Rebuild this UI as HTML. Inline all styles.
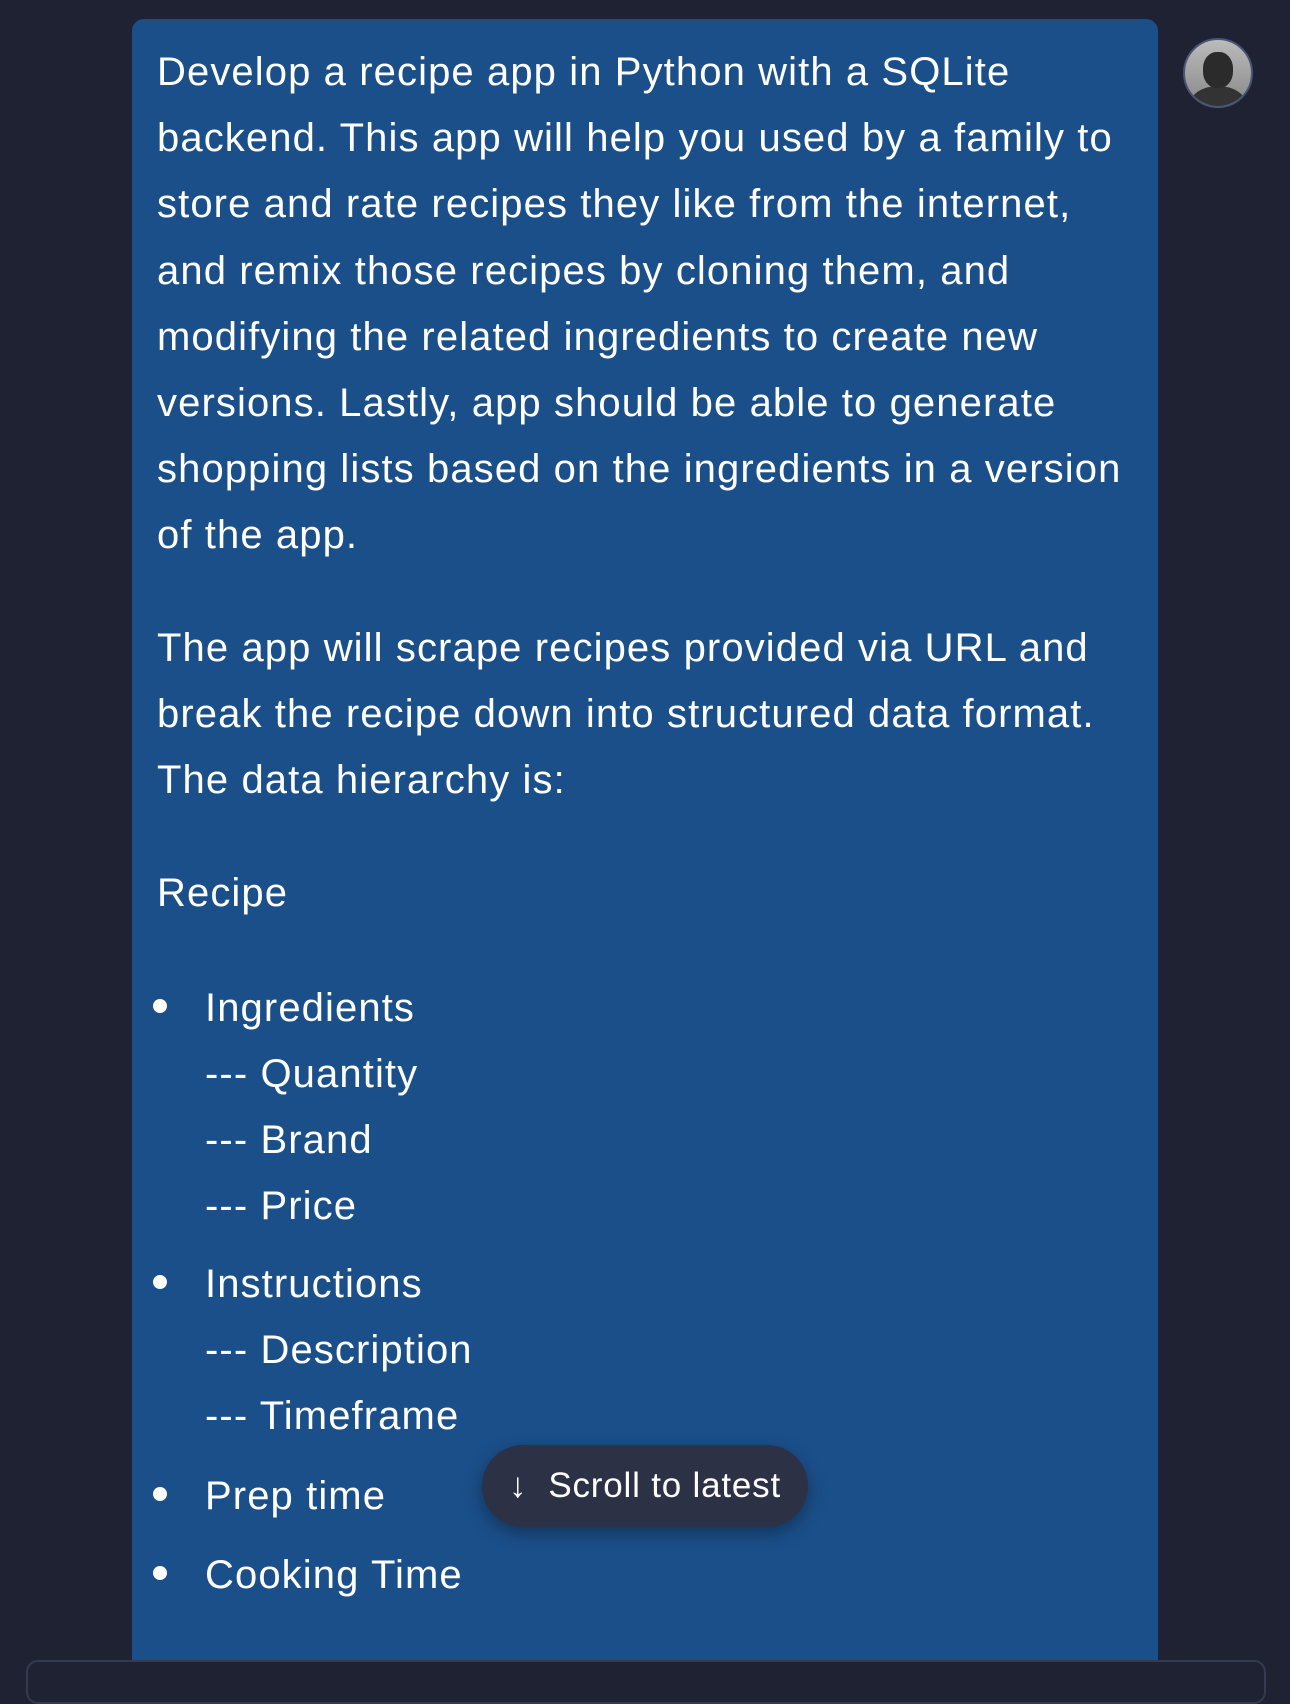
<!DOCTYPE html>
<html><head><meta charset="utf-8"><style>
html,body{margin:0;padding:0;}
body{width:1290px;height:1675px;background:#1e2232;position:relative;overflow:hidden;font-family:"Liberation Sans",sans-serif;color:#fff;}
.bubble{position:absolute;left:132px;top:19px;width:1026px;height:1680px;background:#1b4f8a;border-radius:12px;}
.l{position:absolute;left:157px;font-size:40px;line-height:66px;height:66px;white-space:nowrap;letter-spacing:1.1px;}
.s{left:205px;}
.dot{position:absolute;left:153px;width:14px;height:14px;border-radius:50%;background:#fff;}
.avatar{position:absolute;left:1183px;top:38px;width:66px;height:66px;border-radius:50%;border:2px solid #4a5576;overflow:hidden;background:linear-gradient(#bbb,#888);}
.avatar .f{position:absolute;left:18px;top:12px;width:30px;height:36px;border-radius:45%;background:#2b2b2b;}
.avatar .b{position:absolute;left:4px;top:46px;width:58px;height:40px;border-radius:50%;background:#333;}
.btn{position:absolute;left:482px;top:1445px;width:326px;height:82px;border-radius:41px;background:#2c3146;box-shadow:0 6px 18px rgba(0,0,0,.35);font-size:35px;line-height:82px;text-align:center;white-space:nowrap;letter-spacing:0.8px;}
.input{position:absolute;left:26px;top:1660px;width:1236px;height:40px;border:2px solid #343a50;border-radius:12px;background:#1e2232;}
</style></head><body>
<div class="bubble"></div>
<div class="avatar"><div class="b"></div><div class="f"></div></div>
<div class="l" style="top:39px">Develop a recipe app in Python with a SQLite</div>
<div class="l" style="top:105px">backend. This app will help you used by a family to</div>
<div class="l" style="top:171px">store and rate recipes they like from the internet,</div>
<div class="l" style="top:238px">and remix those recipes by cloning them, and</div>
<div class="l" style="top:304px">modifying the related ingredients to create new</div>
<div class="l" style="top:370px">versions. Lastly, app should be able to generate</div>
<div class="l" style="top:436px">shopping lists based on the ingredients in a version</div>
<div class="l" style="top:502px">of the app.</div>
<div class="l" style="top:615px">The app will scrape recipes provided via URL and</div>
<div class="l" style="top:681px">break the recipe down into structured data format.</div>
<div class="l" style="top:747px">The data hierarchy is:</div>
<div class="l" style="top:860px">Recipe</div>
<div class="dot" style="top:999px"></div>
<div class="l s" style="top:975px">Ingredients</div>
<div class="l s" style="top:1041px">--- Quantity</div>
<div class="l s" style="top:1107px">--- Brand</div>
<div class="l s" style="top:1173px">--- Price</div>
<div class="dot" style="top:1275px"></div>
<div class="l s" style="top:1251px">Instructions</div>
<div class="l s" style="top:1317px">--- Description</div>
<div class="l s" style="top:1383px">--- Timeframe</div>
<div class="dot" style="top:1487px"></div>
<div class="l s" style="top:1463px">Prep time</div>
<div class="dot" style="top:1566px"></div>
<div class="l s" style="top:1542px">Cooking Time</div>
<div class="btn">↓&nbsp; Scroll to latest</div>
<div class="input"></div>
</body></html>
